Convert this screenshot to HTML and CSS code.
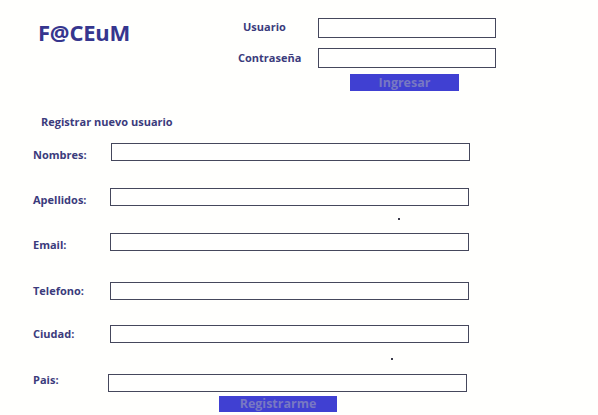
FILE: index.html
```html
<!DOCTYPE html>
<html lang="es">
<head>
<meta charset="utf-8">
<title>F@CEuM</title>
<link rel="stylesheet" href="styles.css">
</head>
<body>
<div class="page">
  <header class="top">
    <div class="logo">F@CEuM</div>
    <form class="login">
      <label class="lbl lbl-user">Usuario</label>
      <input class="field field-login" type="text">
      <label class="lbl">Contraseña</label>
      <input class="field field-login" type="password">
      <span></span>
      <button type="button" class="btn btn-login">Ingresar</button>
    </form>
  </header>

  <h2 class="reg-title">Registrar nuevo usuario</h2>

  <form class="reg">
    <div class="row r1"><label class="lbl lbl-reg down">Nombres:</label><input class="field field-reg" type="text"></div>
    <div class="row r2"><label class="lbl lbl-reg down">Apellidos:</label><input class="field field-reg nudge" type="text"></div>
    <div class="row r3"><label class="lbl lbl-reg down">Email:</label><input class="field field-reg nudge" type="text"></div>
    <div class="row r4"><label class="lbl lbl-reg">Telefono:</label><input class="field field-reg nudge" type="text"></div>
    <div class="row r5"><label class="lbl lbl-reg">Ciudad:</label><input class="field field-reg nudge" type="text"></div>
    <div class="row r6"><label class="lbl lbl-reg up">Pais:</label><input class="field field-reg shift" type="text"></div>
    <button type="button" class="btn btn-reg">Registrarme</button>
    <span class="speck speck-a"></span>
    <span class="speck speck-b"></span>
  </form>
</div>
</body>
</html>
```

FILE: styles.css
```css
* { box-sizing: border-box; }

html, body {
  margin: 0;
  padding: 0;
  background: #fffffd;
}

body {
  font-family: "Open Sans", "Liberation Sans", sans-serif;
  color: #3b3b7c;
  width: 598px;
  height: 415px;
  overflow: hidden;
}

.page {
  position: relative;
  height: 415px;
}

.top {
  display: grid;
  grid-template-columns: 238px auto;
  padding-top: 17px;
}

.logo {
  padding-left: 38px;
  font-size: 22px;
  line-height: 30px;
  font-weight: 700;
  color: #36368e;
  letter-spacing: -0.2px;
}

.login {
  margin: 1px 0 0;
  display: grid;
  grid-template-columns: 80px 178px;
  grid-template-rows: 20px 20px 17px;
  row-gap: 10px;
  align-items: center;
}

.login .btn-login {
  align-self: start;
  margin-top: -4px;
}

.lbl {
  font-size: 11px;
  font-weight: 700;
  color: #3b3b7c;
  line-height: 14px;
  white-space: nowrap;
}

.lbl-user {
  padding-left: 5px;
  margin-top: -3px;
}

.field {
  display: block;
  margin: 0;
  padding: 0;
  border: 1px solid #45475c;
  border-radius: 0;
  background: #fffffe;
  outline: none;
}

.field-login {
  width: 178px;
  height: 20px;
}

.btn {
  display: block;
  margin: 0;
  padding: 0;
  border: none;
  border-radius: 0;
  background: #4040d2;
  color: #7878c2;
  font-family: "Open Sans", "Liberation Sans", sans-serif;
  font-weight: 700;
  text-align: center;
}

.btn-login {
  margin-left: 32px;
  width: 109px;
  height: 17px;
  font-size: 12.5px;
  line-height: 17px;
}

.reg-title {
  margin: 19px 0 0 41px;
  font-size: 11px;
  line-height: 16px;
  font-weight: 700;
  color: #3b3b7c;
}

.reg {
  margin: 0;
  padding-left: 33px;
}

.row {
  display: flex;
  align-items: center;
  height: 18px;
}

.r1 { margin-top: 13px; }
.r2 { margin-top: 27px; }
.r3 { margin-top: 27px; }
.r4 { margin-top: 31px; }
.r5 { margin-top: 25px; }
.r6 { margin-top: 31px; }

.lbl-reg {
  width: 78px;
  flex: none;
}

.down { padding-top: 5px; }
.up { margin-top: -6px; }

.field-reg {
  width: 359px;
  height: 18px;
}

.nudge { margin-left: -1px; }
.shift { margin-left: -3px; }

.btn-reg {
  margin: 4px 0 0 186px;
  width: 118px;
  height: 16px;
  font-size: 12.5px;
  line-height: 16px;
}

.speck {
  position: absolute;
  width: 2px;
  height: 2px;
  background: #3a3a4a;
}

.speck-a { left: 398px; top: 218px; }
.speck-b { left: 391px; top: 358px; }
```
